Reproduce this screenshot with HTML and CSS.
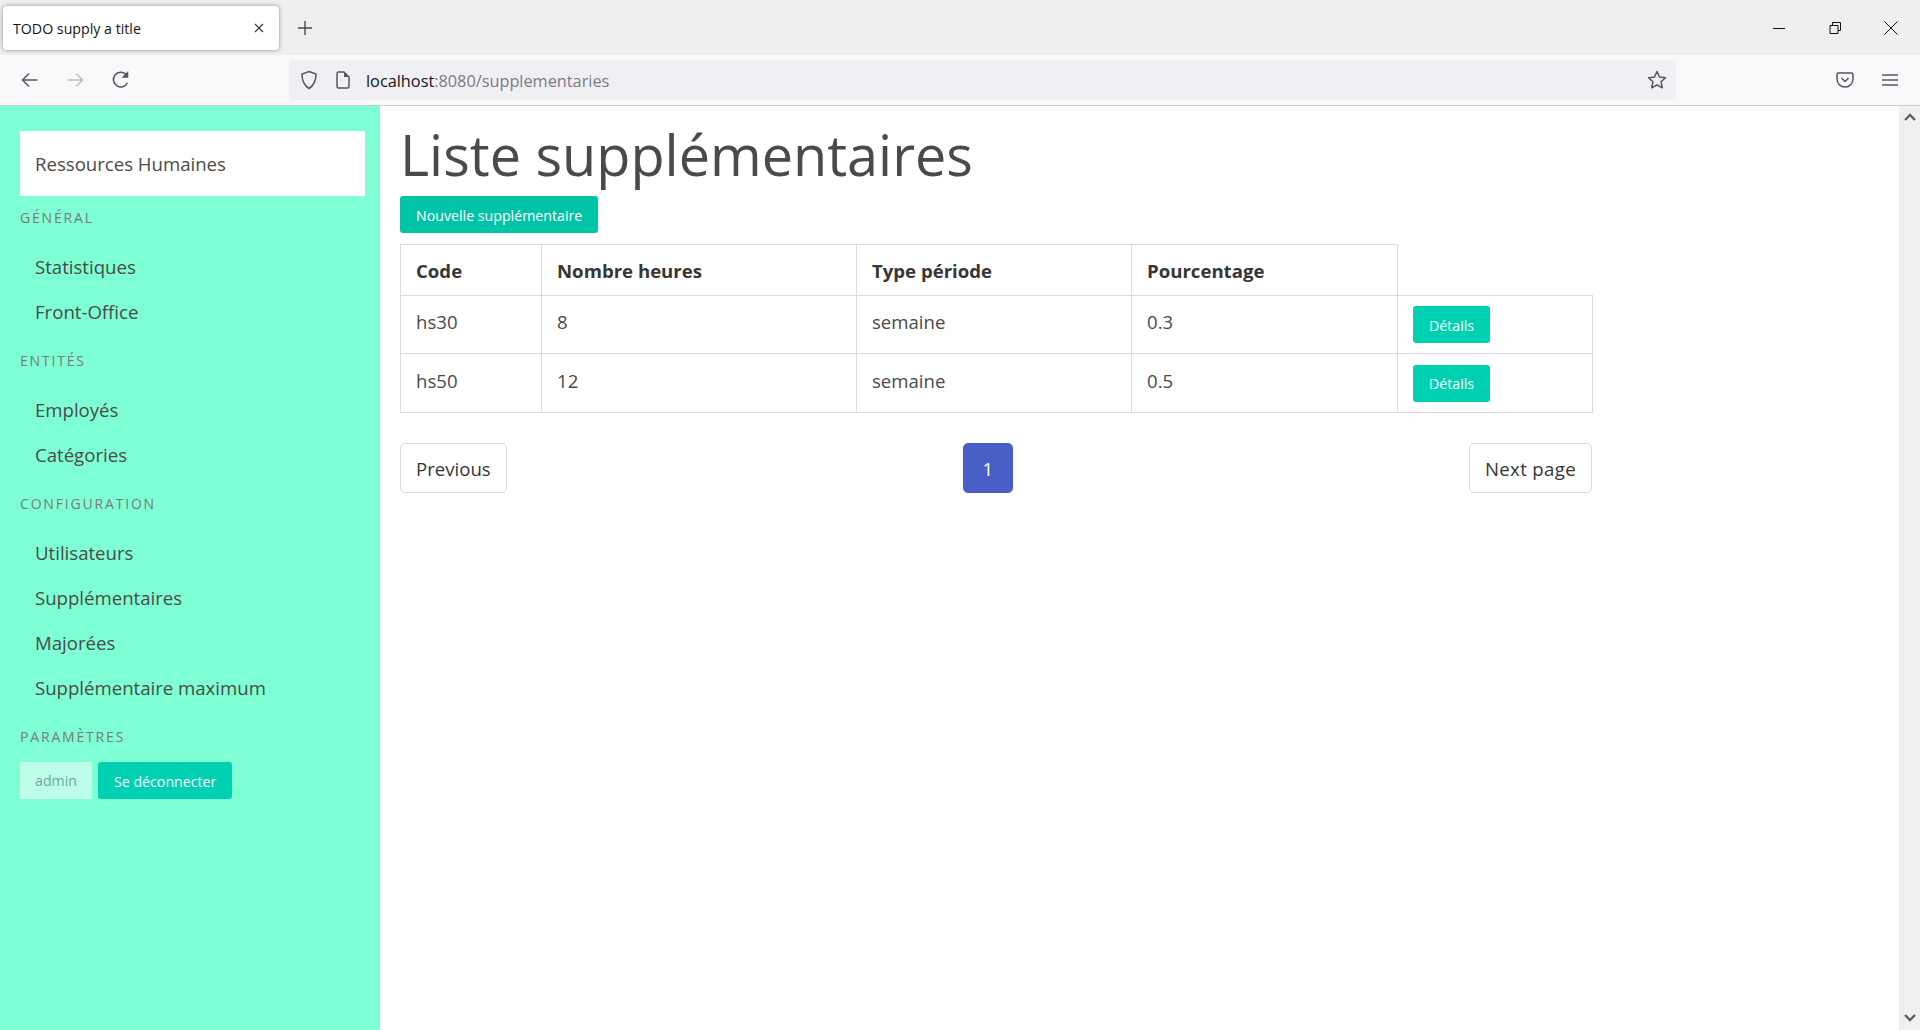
FILE: index.html
```html
<!DOCTYPE html>
<html lang="fr">
<head>
    <meta charset="UTF-8">
    <title>TODO supply a title</title>
    <link rel="stylesheet" href="styles.css">
</head>
<body>
    <!-- barre d'onglets -->
    <div class="tabstrip">
        <div class="tab">
            <span class="tab-title">TODO supply a title</span>
            <svg class="tab-close" width="12" height="12" viewBox="0 0 12 12"><path d="M2 2l8 8M10 2l-8 8" stroke="#3b3b3b" stroke-width="1.2" fill="none"/></svg>
        </div>
        <svg class="new-tab" width="16" height="16" viewBox="0 0 16 16"><path d="M8 1v14M1 8h14" stroke="#4a4a4f" stroke-width="1.4" fill="none"/></svg>
        <div class="window-btns">
            <svg width="14" height="14" viewBox="0 0 14 14"><path d="M1 7.500h12" stroke="#111" stroke-width="1" fill="none"/></svg>
            <svg width="14" height="14" viewBox="0 0 14 14"><path d="M2 4.500h8v8h-8zM4.500 4.500v-3h8v8h-2.500" stroke="#111" stroke-width="1" fill="none"/></svg>
            <svg width="14" height="14" viewBox="0 0 14 14"><path d="M.5.500l13 13M13.500.500l-13 13" stroke="#111" stroke-width="1" fill="none"/></svg>
        </div>
    </div>

    <!-- barre de navigation -->
    <div class="toolbar">
        <div class="nav-btns">
            <svg width="18" height="16" viewBox="0 0 18 16"><path d="M1.500 8h15M8 1.500L1.500 8 8 14.500" stroke="#55555c" stroke-width="1.5" fill="none"/></svg>
            <svg width="18" height="16" viewBox="0 0 18 16"><path d="M1.500 8h15M10 1.500L16.500 8 10 14.500" stroke="#bcbcc2" stroke-width="1.5" fill="none"/></svg>
            <svg width="20" height="20" viewBox="0 0 18 18"><path d="M14.800 11.500A6.600 6.600 0 1 1 13.500 4" stroke="#55555c" stroke-width="1.400" fill="none"/><path d="M15.500 1v6h-6z" fill="#55555c"/></svg>
        </div>
        <div class="urlbar">
            <svg width="18" height="20" viewBox="0 0 18 20"><path d="M9 1.500l7 2.500c0 7-2 11.500-7 14.500C4 15.500 2 11 2 4z" stroke="#55555c" stroke-width="1.5" fill="none"/></svg>
            <svg class="page-icon" width="14" height="18" viewBox="0 0 14 18"><path d="M2.500 1h5.500l5 5v9.500a1.500 1.500 0 0 1-1.500 1.500h-9A1.500 1.500 0 0 1 1 15.500v-13A1.500 1.500 0 0 1 2.500 1z" stroke="#55555c" stroke-width="1.500" fill="none"/><path d="M8 1v5h5z" fill="#55555c"/></svg>
            <span class="url"><span class="url-host">localhost</span>:8080/supplementaries</span>
            <svg class="star" width="20" height="20" viewBox="0 0 20 20"><path d="M10 1.500l2.500 5.500 6 .7-4.400 4.100 1.200 6L10 14.800l-5.300 3 1.200-6L1.500 7.700l6-.7z" stroke="#55555c" stroke-width="1.500" stroke-linejoin="round" fill="none"/></svg>
        </div>
        <div class="tool-btns">
            <svg width="18" height="16" viewBox="0 0 18 16"><path d="M2.500 1h13A1.500 1.500 0 0 1 17 2.500V7a8 8 0 0 1-16 0V2.500A1.500 1.500 0 0 1 2.500 1z" stroke="#55555c" stroke-width="1.500" fill="none"/><path d="M5.500 6L9 9.500 12.500 6" stroke="#55555c" stroke-width="1.500" fill="none"/></svg>
            <svg width="16" height="14" viewBox="0 0 16 14"><path d="M0 2h16M0 7h16M0 12h16" stroke="#55555c" stroke-width="1.500" fill="none"/></svg>
        </div>
    </div>

    <div class="page">
        <!-- menu -->
        <aside class="sidebar">
            <div class="brand">Ressources Humaines</div>
            <p class="menu-label first">Général</p>
            <ul class="menu-list">
                <li>Statistiques</li>
                <li>Front-Office</li>
            </ul>
            <p class="menu-label">Entités</p>
            <ul class="menu-list">
                <li>Employés</li>
                <li>Catégories</li>
            </ul>
            <p class="menu-label">Configuration</p>
            <ul class="menu-list">
                <li>Utilisateurs</li>
                <li>Supplémentaires</li>
                <li>Majorées</li>
                <li>Supplémentaire maximum</li>
            </ul>
            <p class="menu-label">Paramètres</p>
            <div class="user-btns">
                <span class="btn btn-static">admin</span>
                <a class="btn">Se déconnecter</a>
            </div>
        </aside>

        <!-- contenu -->
        <main class="content">
            <h1 class="title">Liste supplémentaires</h1>
            <a class="btn btn-hover">Nouvelle supplémentaire</a>
            <table class="table">
                <thead>
                    <tr>
                        <th class="col-code">Code</th>
                        <th class="col-heures">Nombre heures</th>
                        <th class="col-type">Type période</th>
                        <th class="col-pct">Pourcentage</th>
                        <th class="col-action"></th>
                    </tr>
                </thead>
                <tbody>
                    <tr>
                        <td>hs30</td>
                        <td>8</td>
                        <td>semaine</td>
                        <td>0.3</td>
                        <td><a class="btn">Détails</a></td>
                    </tr>
                    <tr class="row-last">
                        <td>hs50</td>
                        <td>12</td>
                        <td>semaine</td>
                        <td>0.5</td>
                        <td><a class="btn">Détails</a></td>
                    </tr>
                </tbody>
            </table>
            <nav class="pagination">
                <a class="page-btn">Previous</a>
                <a class="page-btn page-current">1</a>
                <a class="page-btn page-next">Next page</a>
            </nav>
        </main>

        <div class="scrollbar">
            <svg width="12" height="8" viewBox="0 0 12 8"><path d="M1 7l5-5 5 5" stroke="#5f5f5f" stroke-width="2.400" fill="none"/></svg>
            <svg width="12" height="8" viewBox="0 0 12 8"><path d="M1 1l5 5 5-5" stroke="#5f5f5f" stroke-width="2.400" fill="none"/></svg>
        </div>
    </div>
</body>
</html>
```

FILE: styles.css
```css
* {
    box-sizing: border-box;
}
html, body {
    height: 100%;
    margin: 0;
}
body {
    display: flex;
    flex-direction: column;
    overflow: hidden;
    font-family: "Open Sans", "Noto Sans", sans-serif;
    font-size: 18.600px;
    color: #4a4a4a;
    background: #fff;
}

/* navigateur */
.tabstrip {
    height: 55px;
    background: #efefef;
    display: flex;
    align-items: center;
    padding-left: 3px;
}
.tab {
    width: 276px;
    height: 44px;
    margin-top: 1px;
    background: #fff;
    border-radius: 4px;
    box-shadow: 0 0 4px rgba(0,0,0,0.4);
    display: flex;
    align-items: center;
    justify-content: space-between;
    padding: 0 14px 0 10px;
}
.tab-title {
    font-size: 14.200px;
    color: #15141a;
}
.new-tab {
    margin-left: 18px;
}
.window-btns {
    margin-left: auto;
    display: flex;
    gap: 42px;
    padding-right: 22px;
}
.toolbar {
    height: 51px;
    background: #f9f9fb;
    border-bottom: 1px solid #ccc;
    display: flex;
    align-items: center;
    padding: 0 21px;
}
.nav-btns {
    display: flex;
    align-items: center;
    gap: 27px;
    width: 268px;
}
.urlbar {
    width: 1387px;
    height: 40px;
    background: #f0f0f4;
    border-radius: 4px;
    display: flex;
    align-items: center;
    padding: 0 9px 0 11px;
}
.page-icon {
    margin-left: 18px;
}
.url {
    margin-left: 16px;
    padding-top: 2px;
    font-size: 16.300px;
    color: #7b7b82;
}
.url-host {
    color: #15141a;
}
.star {
    margin-left: auto;
}
.tool-btns {
    display: flex;
    align-items: center;
    gap: 28px;
    margin-left: 160px;
}

/* page */
.page {
    flex: 1;
    display: flex;
    min-height: 0;
}
.sidebar {
    width: 380px;
    flex-shrink: 0;
    background: #7fffd4;
    padding: 25px 15px 0 20px;
}
.brand {
    height: 65px;
    background: #fff;
    padding-left: 15px;
    display: flex;
    align-items: center;
}
.menu-label {
    margin: 0;
    padding-top: 17px;
    height: 39px;
    font-size: 14px;
    line-height: 20px;
    letter-spacing: 0.13em;
    text-transform: uppercase;
    color: #7a7a7a;
}
.menu-label.first {
    padding-top: 12px;
    height: 34px;
}
.menu-list {
    list-style: none;
    margin: 0;
    padding: 14px 0 0;
}
.menu-list li {
    height: 45px;
    padding-left: 15px;
    display: flex;
    align-items: center;
}
.user-btns {
    display: flex;
    gap: 6px;
    margin-top: 13px;
}
.btn {
    display: inline-flex;
    align-items: center;
    height: 37px;
    padding: 1px 16px 0;
    background: #00d1b2;
    color: #fff;
    font-size: 14.200px;
    border-radius: 3px;
    text-decoration: none;
}
.btn-hover {
    background: #00c4a7;
}
.btn-static {
    background: #bdfeea;
    border: 1px solid #c9fdec;
    border-radius: 0;
    color: #71a797;
    padding: 0 14px;
}

.content {
    flex: 1;
    padding: 13px 0 0 20px;
}
.title {
    margin: 0 0 7px;
    font-size: 55.800px;
    font-weight: 400;
    line-height: 70px;
    color: #4a4a4a;
}
.table {
    border-collapse: collapse;
    table-layout: fixed;
    width: 1192px;
    margin-top: 11px;
}
.table th, .table td {
    border: 1px solid #dbdbdb;
    padding: 0 15px 6px;
    text-align: left;
    height: 58px;
}
.table td:last-child {
    padding-bottom: 0;
}
.table th {
    height: 51px;
    padding-bottom: 0;
    font-weight: 700;
    color: #363636;
}
.table th.col-action {
    border-top: none;
    border-right: none;
}
.row-last td {
    height: 59px;
}
.col-code { width: 141px; }
.col-heures { width: 315px; }
.col-type { width: 275px; }
.col-pct { width: 266px; }
.col-action { width: 195px; }
.pagination {
    width: 1192px;
    margin-top: 30px;
    display: flex;
    justify-content: space-between;
}
.page-btn {
    height: 50px;
    padding: 0 15px;
    border: 1px solid #dbdbdb;
    border-radius: 5px;
    display: flex;
    align-items: center;
    color: #363636;
}
.page-next {
    padding: 0 15px;
    letter-spacing: 0.35px;
}
.page-current {
    width: 50px;
    justify-content: center;
    background: #485fc7;
    border-color: #485fc7;
    color: #fff;
}
.scrollbar {
    width: 21px;
    flex-shrink: 0;
    background: #f0f0f0;
    display: flex;
    flex-direction: column;
    justify-content: space-between;
    align-items: center;
    padding: 7px 0 8px;
}
```
